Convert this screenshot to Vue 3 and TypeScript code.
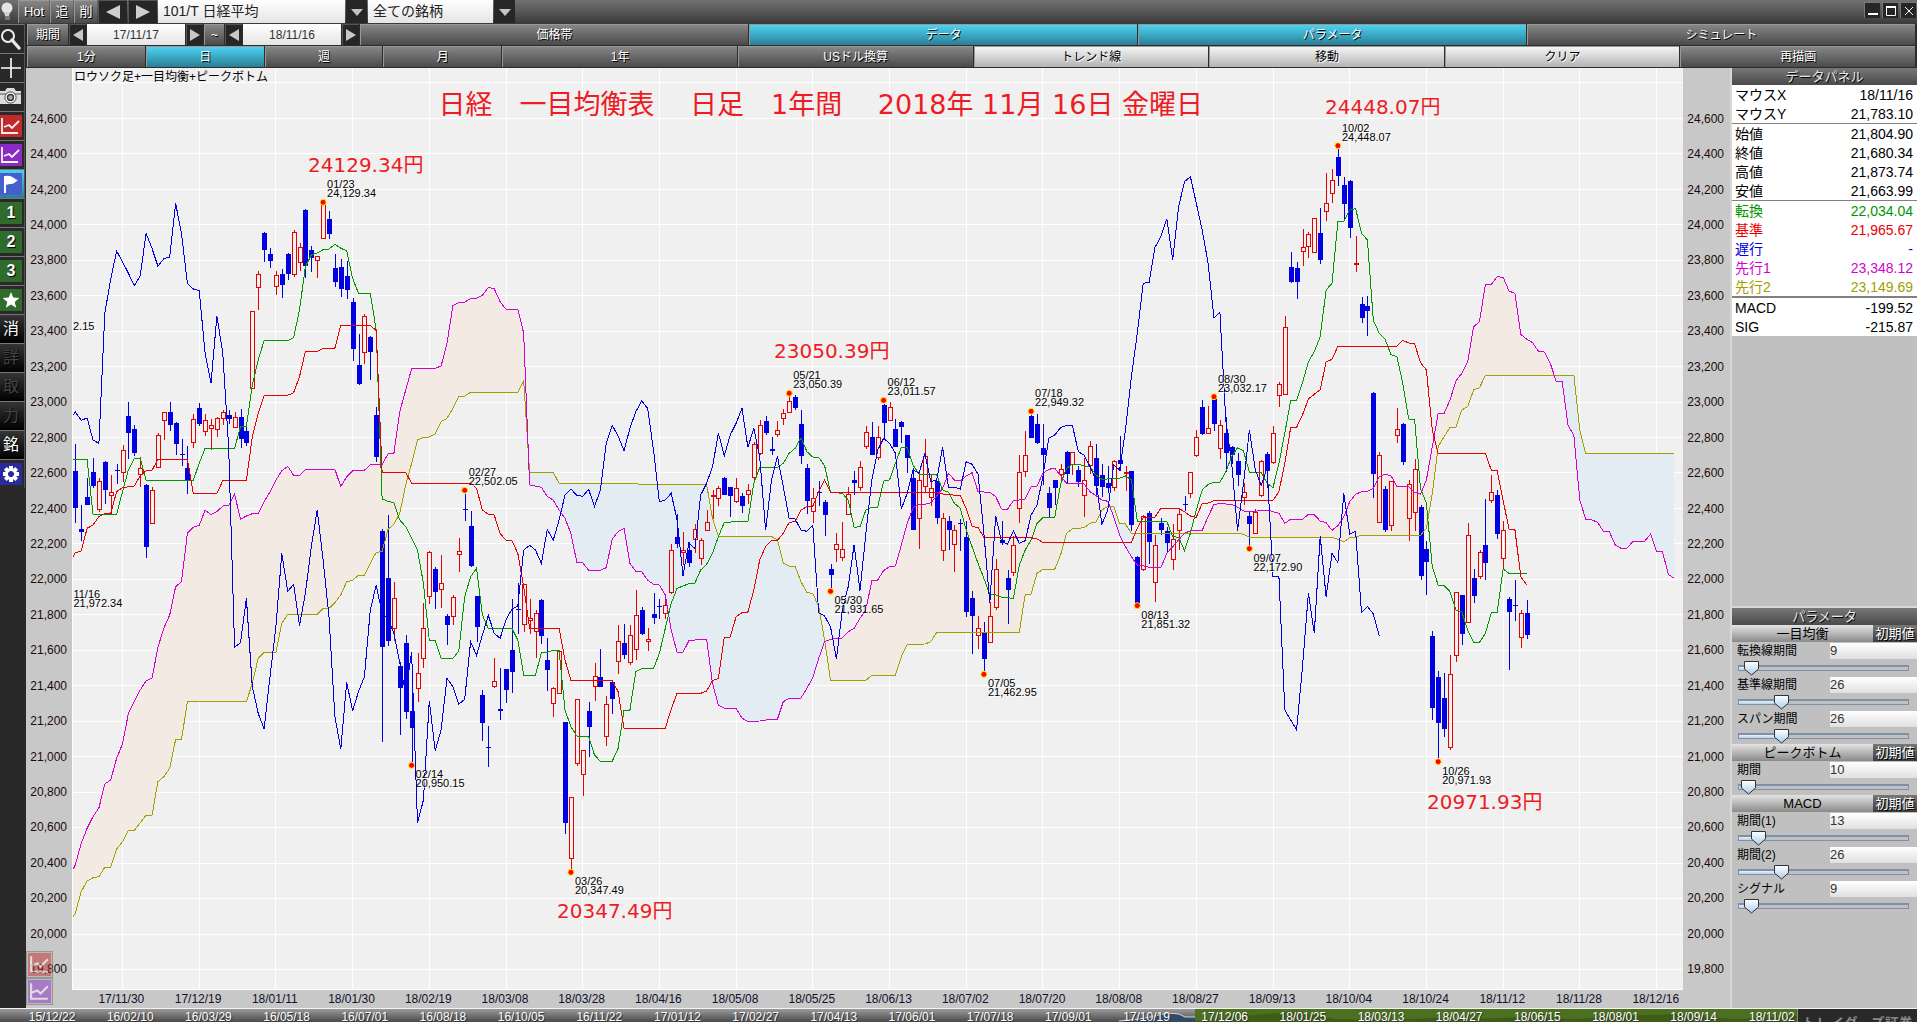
<script setup lang="ts">
import { ref } from 'vue'

type Point = [number, number]

const PLOT_W = 1610
const PLOT_H = 921

// One trading day is 5.9 units wide; vertical readings are stored at three steps per unit.
const dayX = (day: number): number => 2.3 + day * 5.9
const levelY = (level: number): number => level / 3 - 68

const parse = (text: string): Point[] =>
  text.trim().split(/\s+/).map((pair) => {
    const [day, level] = pair.split(',').map(Number)
    return [day, level] as Point
  })

const toPoints = (series: Point[]): string =>
  series.map(([d, l]) => `${dayX(d).toFixed(1)},${levelY(l).toFixed(1)}`).join(' ')

const chikou = parse(`-.5,1248 0,1236 1,1261 2,1254 3,1320 4,1330 5,940 6,838 7,753 8,785 9,820 10,857 11,828 12,700 13,745 14,799 15,776 16,771
17,610 18,700 19,850 20,867 21,872 22,1060 23,1150 24,948 25,1060 26,1345 27,1942 28,1928 29,1795 30,2060 31,2140 32,2186 33,2030 34,1880 35,1660
36,1774 37,1753 38,1877 39,1780 40,1640 41,1530 42,1680 43,1850 44,2150 45,2247 46,2047 47,2133 48,2075 49,2030 50,1830 51,1756 52,1840 53,1858
54,1900 55,1990 56,2080 57,1955 58,2470 59,2400 60,2102 61,2252 62,2190 63,2035 64,2060 65,2113 66,2098 67,1925 68,1966 69,1905 70,1846 71,1900
72,1915 73,1860 74,1827 75,1818 76,1650 77,1636 78,1650 79,1690 80,1588 81,1621 82,1560 83,1485 84,1467 85,1486 86,1489 87,1468 88,1520 89,1470
90,1330 91,1276 92,1308 93,1352 94,1285 95,1235 96,1203 97,1225 98,1350 99,1506 100,1500 101,1480 102,1560 103,1727 104,1628 105,1647 106,1485
107,1450 108,1400 109,1300 110,1367 111,1305 112,1270 113,1225 114,1342 115,1285 116,1370 117,1590 118,1440 119,1369 120,1460 121,1556 122,1557
123,1590 124,1594 125,1575 126,1838 127,1848 128,1880 129,1977 130,1830 131,1760 132,1634 133,1772 134,1600 135,1440 136,1350 137,1315 138,1330
139,1360 140,1527 141,1480 142,1410 143,1420 144,1360 145,1445 146,1440 147,1342 148,1463 149,1462 150,1467 151,1385 152,1393 153,1422 154,1600
155,1810 156,1548 157,1625 158,1632 159,1593 160,1630 161,1622 162,1545 163,1515 164,1430 165,1315 166,1305 167,1283 168,1276 169,1276 170,1355
171,1366 172,1400 173,1440 174,1573 175,1530 176,1395 177,1410 178,1290 179,1130 180,1000 181,850 182,847 183,742 184,710 185,657 186,780 187,620
188,545 189,530 190,610 191,690 192,790 193,955 194,937 195,1260 196,1390 197,1592 198,1450 199,1290 200,1410 201,1455 202,1405 203,1730 204,1728
205,2130 206,2160 207,2189 208,2000 209,1780 210,1900 211,1608 212,1790 213,1660 214,1688 215,1480 216,1602 217,1594 218,1838 219,1819 220,1842
221,1907`)

const tenkan = parse(`-.5,1378 2,1378 3,1543 7,1543 8,1475 9,1410 10,1375 11,1375 12,1441 20,1441 21,1390 22,1345 27,1345 28,1280 29,1279 30,1155
31,1080 32,1022 36,1022 37,1013 38,930 39,800 40,765 41,759 42,749 43,747 44,733 45,745 46,752 47,835 48,880 50,880 51,990 52,1497 53,1504 54,1508
55,1560 56,1580 57,1615 58,1650 59,1750 60,1921 61,1921 62,1975 64,1975 65,1953 66,1790 67,1730 68,1705 69,1845 70,1885 74,1885 75,1920 76,2026
78,2026 79,1957 80,1957 81,1951 82,1952 83,2130 84,2180 85,2208 87,2209 88,2265 89,2284 91,2284 92,2245 93,2131 94,2131 95,2015 96,2006 98,2006
99,1960 100,1885 101,1810 102,1765 104,1751 105,1750 106,1710 107,1693 108,1660 109,1610 110,1567 114,1564 115,1450 116,1403 119,1402 120,1390
121,1360 122,1345 123,1313 124,1355 125,1371 126,1372 127,1397 128,1477 130,1480 131,1500 132,1582 133,1580 134,1530 135,1522 136,1522 137,1443
138,1440 139,1390 140,1342 141,1342 142,1395 143,1422 146,1425 147,1470 148,1477 149,1510 150,1525 151,1590 152,1640 153,1690 154,1735 155,1784
156,1785 157,1792 159,1795 160,1695 161,1650 162,1620 163,1570 164,1553 166,1552 167,1453 168,1405 169,1393 170,1393 171,1398 172,1401 173,1425
174,1438 177,1435 178,1428 179,1440 180,1564 185,1564 186,1610 187,1612 188,1652 189,1600 190,1530 191,1470 192,1453 193,1447 194,1447 195,1415
196,1370 197,1343 198,1353 199,1417 201,1417 202,1450 203,1463 204,1390 205,1300 206,1201 207,1201 208,1148 209,1085 210,1055 211,1010 212,870
213,850 214,664 215,664 216,630 217,626 218,700 219,720 220,960 221,1000 222,1018 223,1064 224,1070 225,1150 226,1257 227,1258 228,1465 229,1510
230,1700 231,1756 232,1757 233,1775 234,1830 235,1835 236,1890 237,1927 238,1927 239,1900 240,1838 241,1837 242,1707 243,1720 246,1720`)

const kijun = parse(`-.5,1676 0,1658 1,1653 2,1585 3,1575 4,1550 5,1541 6,1540 7,1475 8,1463 10,1458 11,1427 12,1412 13,1411 14,1378 19,1378 20,1480
24,1480 25,1442 29,1441 30,1310 31,1240 32,1186 36,1186 37,1178 38,1130 39,1054 41,1054 42,1045 44,1044 45,976 50,976 51,992 52,1417 56,1417
57,1450 67,1450 68,1465 69,1530 70,1543 71,1545 72,1600 73,1621 74,1622 75,1660 76,1760 77,1885 82,1885 83,1980 84,2041 91,2041 92,2075 93,2185
100,2185 101,2127 102,2080 106,2080 107,2073 108,2042 109,2035 110,1912 111,1911 112,1850 113,1838 114,1836 115,1770 116,1680 117,1640 118,1621
119,1621 120,1600 121,1567 122,1565 123,1530 124,1520 125,1518 126,1475 127,1440 128,1477 146,1477 147,1482 150,1487 151,1525 152,1580 153,1582
154,1613 162,1613 163,1617 164,1627 179,1627 180,1585 181,1552 183,1551 184,1525 187,1525 188,1535 189,1548 190,1552 191,1510 192,1509 193,1502
203,1501 204,1475 205,1390 206,1282 207,1282 208,1245 209,1197 210,1183 211,1169 212,1086 213,1078 214,1039 224,1039 225,1021 226,1029 227,1031
228,1088 229,1110 230,1290 231,1360 239,1361 240,1410 241,1412 242,1500 243,1588 244,1589 245,1730 246,1754`)

const senkou1 = parse(`-.5,2612 0,2595 1,2530 2,2485 3,2450 4,2424 5,2352 6,2340 7,2275 8,2232 9,2140 10,2105 11,2070 12,2042 13,2035 14,1942 15,1885
16,1845 17,1760 18,1745 19,1600 20,1582 21,1576 22,1531 23,1544 24,1535 25,1518 26,1516 27,1483 28,1558 29,1548 30,1541 31,1540 32,1505 33,1475
34,1440 35,1412 36,1399 37,1426 38,1427 39,1408 44,1408 45,1460 46,1430 47,1412 49,1411 50,1394 52,1393 53,1362 54,1360 55,1235 56,1170 57,1106
61,1105 62,1098 63,1030 64,917 65,908 66,906 67,896 68,895 69,886 70,862 71,866 72,905 73,928 75,928 76,1000 77,1455 79,1462 80,1490 81,1500
82,1530 83,1555 84,1600 85,1687 86,1688 87,1711 89,1711 90,1703 91,1617 92,1595 93,1585 94,1690 95,1714 96,1715 97,1740 98,1753 99,1755 100,1785
101,1890 102,1957 103,1957 104,1922 105,1920 107,1918 108,2050 109,2115 110,2125 112,2125 113,2155 114,2164 116,2163 117,2160 119,2158 120,2105
121,2095 123,2094 124,2065 125,2033 126,1975 127,1925 128,1918 130,1914 131,1895 132,1885 133,1855 134,1830 135,1742 136,1740 137,1712 138,1700
139,1698 140,1635 141,1570 142,1523 143,1513 144,1513 145,1508 146,1488 147,1465 148,1420 149,1440 150,1443 151,1428 152,1418 153,1475 155,1477
156,1490 157,1527 158,1528 159,1502 160,1500 161,1497 162,1460 163,1458 164,1420 165,1408 166,1405 167,1427 168,1450 171,1452 172,1475 173,1487
174,1500 175,1504 176,1550 177,1605 178,1640 179,1670 180,1695 181,1697 182,1702 184,1703 185,1660 186,1640 187,1620 188,1600 189,1592 191,1591
192,1550 193,1513 194,1511 196,1513 197,1522 198,1533 199,1535 202,1530 204,1540 205,1570 206,1558 208,1558 209,1543 210,1544 211,1563 212,1568
213,1591 214,1577 215,1550 216,1505 217,1483 218,1475 219,1474 220,1465 221,1430 222,1423 223,1427 224,1459 226,1460 227,1477 228,1483 229,1440
230,1340 231,1240 232,1240 233,1200 234,1143 235,1120 236,1085 237,980 238,965 239,853 240,853 241,830 242,832 243,873 244,880 245,1003 246,1018
247,1028 248,1054 249,1056 250,1090 251,1144 252,1144 253,1275 254,1307 255,1500 256,1558 257,1559 258,1567 259,1594 260,1595 261,1635 262,1645
263,1645 264,1624 266,1624 267,1602 268,1654 269,1654 270,1723 271,1735`)

const senkou2 = parse(`-.5,2753 0,2740 1,2675 2,2643 3,2633 4,2630 5,2602 6,2602 7,2547 8,2525 9,2491 10,2491 11,2468 12,2446 13,2446 14,2345 15,2330
16,2305 17,2219 18,2219 19,2105 29,2105 30,2050 31,1975 32,1957 34,1957 35,1870 36,1843 41,1843 42,1825 43,1825 44,1808 45,1785 46,1745 47,1741
48,1726 49,1726 50,1690 51,1657 52,1655 53,1588 54,1573 55,1540 56,1455 57,1390 58,1320 59,1312 60,1311 61,1302 62,1265 63,1255 64,1225 65,1190
66,1188 67,1177 75,1177 76,1142 77,1417 81,1417 82,1450 94,1450 96,1453 107,1453 108,1555 109,1609 118,1609 119,1620 120,1690 121,1698 122,1699
123,1745 124,1778 125,1780 126,1820 127,1920 128,2041 134,2041 135,2026 139,2026 140,1970 141,1935 142,1933 144,1932 145,1925 146,1897 160,1897
161,1783 162,1782 163,1720 164,1708 166,1708 167,1665 168,1600 169,1586 170,1585 171,1583 172,1570 173,1566 174,1530 175,1519 176,1519 177,1570
178,1572 179,1600 197,1600 198,1603 199,1612 213,1612 214,1618 215,1626 216,1613 217,1612 218,1606 228,1606 229,1585 230,1480 231,1340 232,1310
233,1282 234,1282 235,1230 236,1220 237,1170 238,1163 239,1126 254,1126 255,1290 256,1360 271,1361`)

const valueAt = (series: Point[], day: number): number => {
  for (let k = 1; k < series.length; k++) {
    if (series[k][0] >= day) {
      const [d0, l0] = series[k - 1]
      const [d1, l1] = series[k]
      return l0 + ((l1 - l0) * (day - d0)) / (d1 - d0)
    }
  }
  return series[series.length - 1][1]
}

const days: number[] = []
for (let d = -0.5; d <= 271; d += 0.25) days.push(d)
const spanB = days.map((d): Point => [d, valueAt(senkou2, d)])
const upper = days.map((d): Point => [d, Math.min(valueAt(senkou1, d), valueAt(senkou2, d))])
const lower = days.map((d): Point => [d, Math.max(valueAt(senkou1, d), valueAt(senkou2, d))])
const bullCloud = toPoints([...upper, ...[...spanB].reverse()])
const bearCloud = toPoints([...lower, ...[...spanB].reverse()])

const lines = [
  { name: 'senkou2', points: toPoints(senkou2) },
  { name: 'senkou1', points: toPoints(senkou1) },
  { name: 'tenkan', points: toPoints(tenkan) },
  { name: 'kijun', points: toPoints(kijun) },
  { name: 'chikou', points: toPoints(chikou) },
]

// b = falling day, r = rising day; high, body top, body bottom, low.
const candleText = `b1332,1413,1523,1568 b1515,1587,1596,1622 b1435,1491,1515,1515 b1374,1416,1457,1463 r1434,1444,1528,1535 b1383,1386,1470,1511
r1424,1477,1484,1545 b1391,1411,1414,1451 r1335,1351,1417,1445 b1206,1248,1298,1376 b1275,1287,1358,1367 r1372,1405,1422,1460 b1452,1454,1641,1674
r1461,1470,1568,1568 r1298,1306,1402,1404 r1235,1237,1261,1320 b1206,1236,1274,1293 b1266,1269,1331,1365 b1317,1362,1365,1397 b1338,1404,1440,1481
r1242,1258,1327,1345 b1209,1224,1272,1278 r1242,1260,1292,1307 r1258,1276,1283,1349 r1251,1254,1286,1310 r1230,1237,1254,1274 b1230,1245,1258,1271
r1236,1252,1282,1282 b1227,1251,1316,1345 b1267,1293,1328,1338 r934,934,1165,1167 r813,823,862,930 b696,699,749,785 b745,763,782,803
r814,826,857,884 b808,822,854,893 b760,762,822,840 r690,697,821,830 r730,742,787,812 b627,630,797,833 b739,751,773,815 r769,769,781,833
r605,610,713,718 b633,657,701,716 b762,804,845,860 b778,801,866,891 b783,828,869,896 b895,907,1047,1082 b1003,1095,1151,1154 r942,947,1057,1091
b1008,1011,1056,1140 b1221,1245,1370,1385 b1587,1593,1940,2225 b1545,1734,1922,1937 r1745,1794,1885,1923 b1985,1997,2064,2205 b1904,1928,2136,2157
b2040,2133,2184,2285 r1959,2020,2063,2107 r1808,1885,1973,2003 r1653,1657,1787,1813 b1701,1707,1775,1826 r1665,1750,1768,1824 b1842,1848,1875,1935
r1785,1792,1849,1875 r1613,1654,1663,1716 b1482,1527,1530,1563 b1533,1578,1698,1701 b1788,1788,1880,1925 b2070,2085,2169,2222 b2178,2241,2244,2301
r1973,2044,2059,2065 b2005,2127,2132,2160 b2007,2007,2070,2109 b1797,1950,2015,2078 b1748,1826,1829,1902 r1751,1753,1873,1895 r1797,1855,1861,1903
r1830,1840,1894,1973 b1797,1800,1907,1931 b1913,1980,2010,2073 r2062,2065,2110,2150 r1950,1954,2080,2080 b2165,2166,2469,2501 r2392,2392,2575,2607
r2097,2098,2290,2297 r2250,2251,2323,2387 b2106,2134,2180,2270 r1990,2027,2059,2102 b1946,2030,2060,2060 r2087,2113,2207,2238 b2046,2047,2096,2141
r1875,1924,1982,2022 b1873,1929,1964,1976 r1875,1905,1985,1994 r1770,1846,1948,1979 b1820,1829,1902,1905 r1885,1917,1923,1953 b1779,1842,1853,1871
b1796,1819,1822,1856 r1787,1816,1840,1857 r1632,1651,1775,1782 b1543,1611,1631,1644 r1596,1651,1657,1694 b1627,1650,1688,1701 r1572,1588,1616,1658
r1614,1621,1673,1694 r1530,1567,1590,1594 r1470,1485,1489,1558 r1459,1465,1495,1517 b1431,1434,1485,1485 b1461,1461,1487,1550 r1435,1465,1502,1510
b1480,1488,1517,1540 r1453,1471,1481,1513 r1326,1333,1432,1444 r1260,1276,1360,1366 b1248,1263,1299,1306 b1311,1347,1352,1366 r1263,1291,1301,1310
r1227,1240,1255,1274 r1189,1204,1237,1238 b1185,1191,1224,1229 b1230,1272,1367,1392 b1392,1404,1502,1541 r1464,1495,1534,1568 b1443,1476,1479,1517
b1501,1506,1545,1608 b1692,1707,1724,1765 r1599,1631,1648,1685 r1566,1646,1670,1684 r1462,1482,1543,1546 b1414,1440,1449,1486 r1383,1402,1460,1472
r1278,1297,1339,1346 b1266,1311,1364,1366 r1278,1310,1372,1380 b1213,1215,1268,1315 r1206,1222,1261,1263 b1257,1287,1340,1342 b1263,1266,1280,1329
b1305,1305,1373,1418 b1405,1433,1589,1591 r1420,1441,1555,1647 r1317,1369,1459,1477 r1422,1463,1490,1517 b1443,1443,1554,1571 r1539,1555,1651,1682
b1548,1563,1590,1651 r1576,1591,1633,1716 b1557,1569,1572,1652 b1563,1611,1835,1850 b1773,1794,1847,1961 r1848,1885,1906,1946 b1867,1896,1977,2017
r1806,1849,1925,1925 r1677,1708,1822,1829 b1563,1620,1628,1634 b1710,1734,1769,1871 r1609,1636,1717,1727 r1366,1417,1525,1569 r1293,1366,1414,1430
b1245,1248,1313,1313 b1242,1272,1328,1332 b1272,1344,1365,1455 b1461,1479,1523,1552 b1440,1440,1464,1515 r1392,1408,1422,1445 b1353,1356,1422,1448
r1357,1357,1393,1424 b1398,1410,1446,1460 r1375,1441,1486,1550 r1323,1339,1396,1422 b1332,1374,1459,1484 b1393,1425,1461,1490 b1398,1450,1464,1478
r1380,1384,1462,1472 b1308,1380,1391,1412 r1398,1417,1420,1472 b1413,1414,1575,1592 b1669,1671,1812,1817 r1546,1547,1708,1713 b1534,1539,1625,1693
r1606,1634,1747,1805 b1555,1569,1590,1606 b1582,1593,1628,1658 r1573,1618,1678,1710 r1527,1543,1591,1649 b1488,1513,1516,1532 r1415,1417,1480,1495
r1290,1312,1366,1372 b1200,1221,1301,1306 r1218,1284,1300,1300 b1192,1194,1271,1292 r1260,1276,1345,1377 b1252,1300,1358,1417 b1338,1341,1365,1393
b1360,1383,1424,1458 r1448,1477,1492,1515 b1536,1548,1571,1641 r1527,1537,1600,1603 r1381,1384,1486,1490 b1357,1362,1412,1463 r1278,1300,1387,1393
r1146,1153,1186,1222 r948,982,1183,1183 b756,801,845,849 b786,804,845,896 r687,742,754,797 r696,703,737,775 r655,655,755,760 b624,699,780,791
r520,609,632,662 r508,541,580,608 b447,471,528,558 b531,555,612,656 b541,543,683,713 r708,788,791,815 b891,912,953,968 b888,919,933,1007
b1176,1179,1422,1494 r1356,1366,1565,1565 b1458,1467,1590,1597 r1444,1444,1576,1593 r1224,1288,1306,1328 b1269,1272,1386,1396 r1440,1453,1555,1622
r1377,1408,1537,1593 b1515,1521,1727,1739 b1623,1647,1685,1784 b1893,1908,2123,2159 b2013,2031,2168,2275 b2019,2094,2187,2210 r1965,2023,2242,2249
r1777,1777,1966,1985 b1785,1785,1901,1934 r1569,1606,1865,1868 b1706,1734,1787,1808 r1650,1657,1727,1738 b1497,1635,1688,1739 r1425,1477,1499,1510
b1470,1485,1601,1616 r1563,1591,1673,1710 b1791,1797,1835,2010 b1740,1815,1818,1862 r1830,1840,1912,1943 b1800,1839,1905,1916`

const candles = candleText.split(/\s+/).map((entry, day) => {
  const [high, top, bottom, low] = entry.slice(1).split(',').map((v) => Math.round(levelY(Number(v))))
  return {
    kind: entry[0] === 'r' ? 'rise' : 'fall',
    x: Math.round(dayX(day)),
    high,
    top,
    bottom: Math.max(bottom, top + 1),
    low: Math.max(low, bottom),
  }
})

const rowLines = Array.from({ length: 26 }, (_, k) => Math.round(levelY(247 + k * 106.4)))
const columnLines = Array.from({ length: 21 }, (_, k) => Math.round(49 + k * 76.7))

const prices = Array.from({ length: 25 }, (_, k) => (24600 - k * 200).toLocaleString('en-US'))
const dates = ['17/11/30', '17/12/19', '18/01/11', '18/01/30', '18/02/19', '18/03/08', '18/03/28', '18/04/16', '18/05/08', '18/05/25',
  '18/06/13', '18/07/02', '18/07/20', '18/08/08', '18/08/27', '18/09/13', '18/10/04', '18/10/24', '18/11/12', '18/11/28', '18/12/16']
const history = ['15/12/22', '16/02/10', '16/03/29', '16/05/18', '16/07/01', '16/08/18', '16/10/05', '16/11/22', '17/01/12', '17/02/27',
  '17/04/13', '17/06/01', '17/07/18', '17/09/01', '17/10/19', '17/12/06', '18/01/25', '18/03/13', '18/04/27', '18/06/15', '18/08/01',
  '18/09/14', '18/11/02']

const percent = (value: number, total: number): string => `${((value / total) * 100).toFixed(3)}%`

const peak = (day: number, level: number, side: 'above' | 'below', date: string, price: string) => ({
  x: dayX(day), y: levelY(level), side, date, price,
})
const peaks = [
  peak(-1, 1754, 'below', '11/16', '21,972.34'),
  peak(42, 607, 'above', '01/23', '24,129.34'),
  peak(57, 2296, 'below', '02/14', '20,950.15'),
  peak(66, 1471, 'above', '02/27', '22,502.05'),
  peak(84, 2617, 'below', '03/26', '20,347.49'),
  peak(121, 1180, 'above', '05/21', '23,050.39'),
  peak(128, 1774, 'below', '05/30', '21,931.65'),
  peak(137, 1201, 'above', '06/12', '23,011.57'),
  peak(154, 2023, 'below', '07/05', '21,462.95'),
  peak(162, 1234, 'above', '07/18', '22,949.32'),
  peak(180, 1817, 'below', '08/13', '21,851.32'),
  peak(193, 1190, 'above', '08/30', '23,032.17'),
  peak(199, 1646, 'below', '09/07', '22,172.90'),
  peak(214, 437, 'above', '10/02', '24,448.07'),
  peak(231, 2285, 'below', '10/26', '20,971.93'),
]

const notes = [
  { text: '24129.34円', x: 235, y: 97 },
  { text: '24448.07円', x: 1252, y: 39 },
  { text: '23050.39円', x: 701, y: 283 },
  { text: '20347.49円', x: 484, y: 843 },
  { text: '20971.93円', x: 1354, y: 734 },
]

const dataGroups = [
  [['マウスX', '18/11/16', ''], ['マウスY', '21,783.10', '']],
  [['始値', '21,804.90', ''], ['終値', '21,680.34', ''], ['高値', '21,873.74', ''], ['安値', '21,663.99', '']],
  [['転換', '22,034.04', 'green'], ['基準', '21,965.67', 'red'], ['遅行', '-', 'blue'], ['先行1', '23,348.12', 'magenta'], ['先行2', '23,149.69', 'olive']],
  [['MACD', '-199.52', ''], ['SIG', '-215.87', '']],
]

const sections = ref([
  { title: '一目均衡', items: [
    { label: '転換線期間', value: 9, min: 6, max: 93 },
    { label: '基準線期間', value: 26, min: 6, max: 93 },
    { label: 'スパン期間', value: 26, min: 6, max: 93 },
  ] },
  { title: 'ピークボトム', items: [{ label: '期間', value: 10, min: 9, max: 109 }] },
  { title: 'MACD', items: [
    { label: '期間(1)', value: 13, min: 6, max: 93 },
    { label: '期間(2)', value: 26, min: 6, max: 93 },
    { label: 'シグナル', value: 9, min: 6, max: 93 },
  ] },
])
const fillOf = (item: { value: number; min: number; max: number }): string =>
  percent(item.value - item.min, item.max - item.min)

const views = [
  { label: '価格帯', on: false }, { label: 'データ', on: true }, { label: 'パラメータ', on: true }, { label: 'シミュレート', on: false },
]
const tools = [
  { label: '1分', kind: '' }, { label: '日', kind: 'on' }, { label: '週', kind: '' }, { label: '月', kind: '' },
  { label: '1年', kind: 'wide' }, { label: 'USドル換算', kind: 'wide' }, { label: 'トレンド線', kind: 'wide light' },
  { label: '移動', kind: 'wide light' }, { label: 'クリア', kind: 'wide light' }, { label: '再描画', kind: 'wide' },
]
const side = [
  { id: 'search', label: '検索' }, { id: 'cross', label: '十字線' }, { id: 'camera', label: '撮影' },
  { id: 'chart', label: 'チャート1', tile: 'tile-red' }, { id: 'chart', label: 'チャート2', tile: 'tile-purple' },
  { id: 'flag', label: '旗', tile: 'tile-blue', active: true },
  { id: 'text', label: '1', tile: 'tile-green' }, { id: 'text', label: '2', tile: 'tile-green' }, { id: 'text', label: '3', tile: 'tile-green' },
  { id: 'star', label: 'お気に入り', tile: 'tile-green' },
  { id: 'text', label: '消', word: true }, { id: 'text', label: '詳', word: true, off: true }, { id: 'text', label: '取', word: true, off: true },
  { id: 'text', label: '力', word: true, off: true }, { id: 'text', label: '銘', word: true },
  { id: 'gear', label: '設定', tile: 'tile-navy' },
]
const teeth = [0, 45, 90, 135, 180, 225, 270, 315]
const dateFrom = ref('17/11/17')
const dateTo = ref('18/11/16')
</script>

<template>
  <div class="app">
    <header class="titlebar">
      <svg class="bulb" viewBox="0 0 16 22" aria-hidden="true">
        <circle cx="6" cy="8" r="5.500" fill="#e4e4e4" /><path d="M3 12h6l-1 4H4z" fill="#d0d0d0" />
        <path d="M4 16h5v4H4z" fill="#9a9a9a" /><path d="M4 17h5M4 19h5" stroke="#555" />
      </svg>
      <button class="btn hot">Hot</button>
      <button class="btn word">追</button>
      <button class="btn word">削</button>
      <button class="btn dark nav" aria-label="前の銘柄"><svg viewBox="0 0 14 16"><path d="M14 1v14L0 8z" fill="#cfcfcf" /></svg></button>
      <button class="btn dark nav" aria-label="次の銘柄"><svg viewBox="0 0 14 16"><path d="M0 1v14l14-7z" fill="#cfcfcf" /></svg></button>
      <label class="pick stock">
        <select aria-label="銘柄"><option>101/T 日経平均</option></select>
        <span class="drop"><svg viewBox="0 0 12 8"><path d="M0 1h12L6 8z" fill="#c4c4c4" /></svg></span>
      </label>
      <label class="pick group">
        <select aria-label="銘柄グループ"><option>全ての銘柄</option></select>
        <span class="drop"><svg viewBox="0 0 12 8"><path d="M0 1h12L6 8z" fill="#c4c4c4" /></svg></span>
      </label>
      <div class="window">
        <button aria-label="最小化"><svg viewBox="0 0 12 12"><path d="M1 9h10" stroke="#fff" stroke-width="2" /></svg></button>
        <button aria-label="最大化"><svg viewBox="0 0 12 12"><path d="M1.5 1.5h9v9h-9z" fill="none" stroke="#fff" /><path d="M1 2h10" stroke="#fff" stroke-width="2" /></svg></button>
        <button aria-label="閉じる"><svg viewBox="0 0 12 12"><path d="M2 2l8 8M10 2l-8 8" stroke="#fff" /></svg></button>
      </div>
    </header>

    <div class="body">
      <nav class="sidebar">
        <button v-for="(b, n) in side" :key="n" :class="{ active: b.active, word: b.word, off: b.off }" :aria-label="b.label">
          <span class="tile" :class="b.tile">
            <template v-if="b.id === 'text'">{{ b.label }}</template>
            <svg v-else viewBox="0 0 22 22">
              <template v-if="b.id === 'search'">
                <circle cx="8" cy="8" r="6" fill="none" stroke="#f0f0f0" stroke-width="2" />
                <path d="M12 12l7 8" stroke="#e8e8e8" stroke-width="3.4" stroke-linecap="round" />
              </template>
              <path v-else-if="b.id === 'cross'" d="M11 1v20M1 11h20" stroke="#fff" stroke-width="1.6" />
              <template v-else-if="b.id === 'camera'">
                <path d="M0 5h5l2-3h7l2 3h5v13H0z" fill="#dcdcdc" /><path d="M0 8h21" stroke="#555" />
                <circle cx="10.5" cy="11.5" r="5.6" fill="#fff" stroke="#444" /><circle cx="10.5" cy="11.5" r="3" fill="#aaa" stroke="#333" stroke-width="1.4" />
              </template>
              <template v-else-if="b.id === 'chart'">
                <path d="M2 3v15h16" fill="none" stroke="#f4f4f4" stroke-width="1.8" />
                <path d="M4 12l5-2 3 3 7-7" fill="none" stroke="#f4f4f4" stroke-width="1.8" />
              </template>
              <path v-else-if="b.id === 'flag'" d="M4 3v17h2V12c4-2 6 1 12-5-4 0-5-5-12-4z" fill="#fff" />
              <path v-else-if="b.id === 'star'" d="M11 3l2.3 5.6 6 .4-4.6 3.9 1.5 5.9L11 15.6 5.8 18.800l1.5-5.9L2.7 9l6-.4z" fill="#fff" />
              <g v-else fill="#fff">
                <rect v-for="a in teeth" :key="a" x="9" y="3" width="4" height="5" :transform="`rotate(${a} 11 11)`" />
                <circle cx="11" cy="11" r="4.600" fill="none" stroke="#fff" stroke-width="3" />
              </g>
            </svg>
          </span>
        </button>
      </nav>

      <div class="workspace">
        <div class="row">
          <span class="btn period">期間</span>
          <button class="btn dark step" aria-label="開始日を戻す"><svg viewBox="0 0 10 12"><path d="M10 0v12L0 6z" fill="#c8c8c8" /></svg></button>
          <input v-model="dateFrom" class="date" aria-label="開始日" />
          <button class="btn dark step" aria-label="開始日を進める"><svg viewBox="0 0 10 12"><path d="M0 0v12l10-6z" fill="#c8c8c8" /></svg></button>
          <span class="btn tilde">~</span>
          <button class="btn dark step" aria-label="終了日を戻す"><svg viewBox="0 0 10 12"><path d="M10 0v12L0 6z" fill="#c8c8c8" /></svg></button>
          <input v-model="dateTo" class="date" aria-label="終了日" />
          <button class="btn dark step" aria-label="終了日を進める"><svg viewBox="0 0 10 12"><path d="M0 0v12l10-6z" fill="#c8c8c8" /></svg></button>
          <button v-for="v in views" :key="v.label" class="btn grow" :class="{ on: v.on }">{{ v.label }}</button>
        </div>
        <div class="row">
          <button v-for="t in tools" :key="t.label" class="btn grow" :class="t.kind">{{ t.label }}</button>
        </div>

        <div class="content">
          <main class="chart">
            <div class="prices left"><span v-for="p in prices" :key="p">{{ p }}</span></div>
            <div class="plot">
              <svg class="canvas" :viewBox="`0 0 ${PLOT_W} ${PLOT_H}`" preserveAspectRatio="none">
                <g class="grid">
                  <rect v-for="y in rowLines" :key="'r' + y" x="0" :y="y" :width="PLOT_W" height="1" />
                  <rect v-for="x in columnLines" :key="'c' + x" :x="x" y="0" width="1" :height="PLOT_H" />
                </g>
                <polygon class="bull" :points="bullCloud" />
                <polygon class="bear" :points="bearCloud" />
                <g v-for="(c, n) in candles" :key="n" :class="c.kind">
                  <rect class="solid" :x="c.x" :y="c.high" width="1" :height="Math.max(0, c.top - c.high)" />
                  <rect class="solid" :x="c.x" :y="c.bottom" width="1" :height="Math.max(0, c.low - c.bottom)" />
                  <rect v-if="c.kind === 'fall'" class="solid" :x="c.x - 2" :y="c.top" width="5" :height="c.bottom - c.top" />
                  <rect v-else class="hollow" :x="c.x - 1.5" :y="c.top + 0.5" width="4" :height="c.bottom - c.top" />
                </g>
                <polyline v-for="l in lines" :key="l.name" class="line" :class="l.name" :points="l.points" />
                <circle v-for="p in peaks" :key="p.date" class="dot" :cx="p.x" :cy="p.y" r="3" />
              </svg>
              <span class="legend">ロウソク足+一目均衡+ピークボトム</span>
              <h1 class="heading">日経　一目均衡表　 日足　1年間　 2018年 11月 16日 金曜日</h1>
              <span class="clipped">2.15</span>
              <span
                v-for="p in peaks" :key="p.date" class="peak" :class="p.side"
                :style="{ left: percent(p.x, PLOT_W), top: percent(p.y, PLOT_H) }"
              >{{ p.date }}<br />{{ p.price }}</span>
              <span
                v-for="n in notes" :key="n.text" class="note"
                :style="{ left: percent(n.x, PLOT_W), top: percent(n.y, PLOT_H) }"
              >{{ n.text }}</span>
            </div>
            <div class="prices right"><span v-for="p in prices" :key="p">{{ p }}</span></div>
            <div class="dates"><span v-for="d in dates" :key="d">{{ d }}</span></div>
            <div class="floating">
              <button v-for="t in ['tile-red', 'tile-purple']" :key="t" :aria-label="t === 'tile-red' ? 'サブチャート1' : 'サブチャート2'">
                <svg :class="t" viewBox="0 0 22 22">
                  <path d="M3 3v15h16M4 12l5-2 3 3 7-7" fill="none" stroke="#f4f4f4" stroke-width="2" />
                </svg>
              </button>
            </div>
          </main>

          <aside class="panel">
            <h2 class="bar">データパネル</h2>
            <table class="data">
              <tbody v-for="(g, n) in dataGroups" :key="n">
                <tr v-for="r in g" :key="r[0]" :class="r[2]"><th scope="row">{{ r[0] }}</th><td>{{ r[1] }}</td></tr>
              </tbody>
            </table>
            <div class="params">
              <h2 class="bar">パラメータ</h2>
              <section v-for="s in sections" :key="s.title">
                <div class="sectionhead"><h3>{{ s.title }}</h3><button>初期値</button></div>
                <div v-for="item in s.items" :key="item.label" class="param">
                  <label class="field"><span>{{ item.label }}</span><input v-model.number="item.value" type="text" /></label>
                  <input
                    v-model.number="item.value" type="range" :min="item.min" :max="item.max"
                    :aria-label="item.label" :style="{ '--fill': fillOf(item) }"
                  />
                </div>
              </section>
            </div>
          </aside>
        </div>
      </div>
    </div>

    <footer class="footer">
      <div class="timeline">
        <div class="past">
          <svg viewBox="0 0 76 14" preserveAspectRatio="none">
            <path d="M0 12l20-2 12-2 16-4 12 1 6 3h10v6H0z" fill="#33496a" /><path d="M0 12l20-2 12-2 16-4 12 1 6 3h10" fill="none" stroke="#d8d8d8" />
          </svg>
        </div>
        <div class="selected">
          <svg viewBox="0 0 602 14" preserveAspectRatio="none">
            <path d="M0 12l40-4 30-3 30-2 40 7 50 1 50-2 40 1 50-2 50 2 50-3 50-2 60 5 62-3v9H0z" fill="#3d5c16" />
          </svg>
        </div>
        <div class="history"><span v-for="d in history" :key="d">{{ d }}</span></div>
      </div>
      <div class="brand">トレイダーズ証券</div>
    </footer>
  </div>
</template>

<style>
body { margin: 0; overflow: hidden; }
</style>

<style scoped>
* { box-sizing: border-box; }
.app {
  display: flex; flex-direction: column; height: 100vh; overflow: hidden; background: #292929; color: #000;
  font-family: "Liberation Sans", "Noto Sans CJK JP", sans-serif; font-size: 12px; line-height: 16px;
}
button, input, select { font: inherit; border: 0; border-radius: 0; margin: 0; padding: 0; }
h1, h2, h3 { margin: 0; font-weight: 400; }

.btn {
  display: flex; align-items: center; justify-content: center; height: 21px; color: #fff;
  background: linear-gradient(#868686, #4a4a4a); border-top: 1px solid #999; border-left: 1px solid #999;
  text-shadow: 1px 1px 0 #000; white-space: nowrap;
}
.btn.dark { background: #262626; border-color: #555; }
.btn.on { background: linear-gradient(#4dd2f2, #2a7f95); }
.btn.light { background: linear-gradient(#f4f4f4, #b4b4b4); color: #000; text-shadow: 1px 1px 0 #fff; }

.titlebar { display: flex; align-items: flex-start; height: 24px; background: linear-gradient(#717171, #393939); flex: none; }
.titlebar .btn { height: 23px; margin-right: 1px; font-size: 13px; }
.bulb { width: 18px; height: 22px; }
.titlebar .hot { width: 31px; }
.titlebar .word { width: 23px; }
.titlebar .nav { width: 29px; }
.nav svg { width: 14px; height: 16px; }
.pick { display: flex; height: 23px; }
.pick select { appearance: none; background: linear-gradient(#fff, #e4e4e4); color: #222; font-size: 14px; padding: 0 4px 2px 5px; }
.stock select { width: 187px; }
.group select { width: 125px; }
.drop { display: flex; align-items: center; justify-content: center; width: 21px; margin: 0 1px; background: #262626; }
.drop svg { width: 12px; height: 8px; }
.window { display: flex; gap: 2px; margin: 2px 1px 0 auto; }
.window button { display: flex; align-items: center; justify-content: center; width: 16px; height: 16px; background: #262626; border-top: 1px solid #777; border-left: 1px solid #777; }
.window svg { width: 12px; height: 12px; }

.body { display: flex; flex: 1; min-height: 0; }
.sidebar { width: 26px; flex: none; }
.sidebar button {
  display: flex; align-items: center; width: 25px; height: 29px; color: #fff; background: #292929;
  border-top: 1px solid #777; border-right: 1px solid #555;
}
.sidebar button.word { background: linear-gradient(#353535, #000); font-size: 16px; }
.sidebar button.off { color: #444; }
.sidebar button.active { background: linear-gradient(#4dd2f2, #2a7f95); }
.tile { display: flex; align-items: center; justify-content: center; width: 22px; height: 22px; font-size: 16px; text-shadow: 1px 1px 1px #000; }
.tile svg { width: 22px; height: 22px; }
.tile-red { background: #c22a2a; }
.tile-purple { background: #8a2cc4; }
.tile-blue { background: #4560cc; }
.tile-green { background: #2f6b2c; font-weight: 700; }
.tile-navy { background: #2a2a9c; }

.workspace { display: flex; flex-direction: column; flex: 1; min-width: 0; }
.row { display: flex; gap: 1px; height: 22px; padding: 0 2px 0 1px; background: #2c2c2c; flex: none; }
.period { width: 41px; }
.step { width: 17px; }
.step svg { width: 10px; height: 12px; }
.tilde { width: 20px; }
.date { width: 98px; height: 21px; text-align: center; background: linear-gradient(#fff, #e4e4e4); color: #333; }
.grow { flex: 1 1 0; min-width: 0; }
.wide { flex: 2 1 1px; }

.content { display: flex; flex: 1; min-height: 0; }
.chart {
  position: relative; flex: 1; min-width: 0; display: grid; grid-template-columns: 46px minmax(0, 1fr) 47px;
  grid-template-rows: minmax(0, 1fr) 18px; background: #c8c8c8;
}
.prices { display: flex; flex-direction: column; padding: 33px 0 3px; color: #1c0808; }
.prices span { display: flex; flex: 1; align-items: center; justify-content: flex-end; }
.left { padding-right: 5px; }
.right { padding-right: 6px; }
.dates { grid-column: 1 / -1; display: flex; margin: 0 36px 0 57px; color: #101028; }
.dates span { flex: 1; text-align: center; line-height: 19px; }
.plot { position: relative; overflow: hidden; background: #f0f0f0; border: 1px solid #fff; border-width: 0 0 1px 1px; }
.canvas { display: block; width: 100%; height: 100%; shape-rendering: crispEdges; }
.grid rect { fill: #fff; }
.bull { fill: #f4eae4; }
.bear { fill: #e3ebf3; }
.line { fill: none; stroke-width: 1; vector-effect: non-scaling-stroke; }
.senkou1 { stroke: #d200d2; }
.senkou2 { stroke: #a0a000; }
.tenkan { stroke: #009600; }
.kijun { stroke: #e60000; }
.chikou { stroke: #0000e0; }
.fall .solid { fill: #0000e0; }
.rise .solid { fill: #e60000; }
.rise .hollow { fill: none; stroke: #e60000; }
.dot { fill: #f00; stroke: #fe0; shape-rendering: auto; }
.legend { position: absolute; left: 1px; top: 1px; white-space: nowrap; }
.heading, .note { color: #ed1c24; font-family: "DejaVu Sans", "Noto Sans CJK JP", sans-serif; white-space: nowrap; }
.heading { position: absolute; left: 22.7%; top: 21px; font-size: 27px; line-height: 32px; font-weight: 400; }
.note { position: absolute; font-size: 20px; line-height: 24px; transform: translateY(-50%); }
.peak, .clipped { position: absolute; font-size: 11px; line-height: 9px; white-space: nowrap; text-shadow: 1px 1px 0 #fff; }
.peak { padding-left: 4px; }
.above { transform: translateY(-22px); }
.below { transform: translateY(5px); }
.clipped { left: 0; top: 27.6%; }
.floating { position: absolute; left: 0; bottom: 3px; display: flex; flex-direction: column; opacity: .5; }
.floating button { display: flex; align-items: center; justify-content: center; width: 27px; height: 27px; background: #b0b0b0; border: 1px solid #666; }
.floating svg { width: 23px; height: 23px; }

.panel { display: flex; flex-direction: column; width: 187px; flex: none; background: #c0c0c0; border-left: 2px solid #d8d8d8; }
.bar {
  height: 17px; line-height: 17px; font-size: 13px; text-align: center; color: #e8e8e8;
  background: linear-gradient(#777, #4a4a4a); text-shadow: 1px 1px 0 #000;
}
.data { width: 100%; border-collapse: collapse; background: #fff; font-size: 14px; }
.data th, .data td { height: 19px; padding: 1px 4px 0 3px; line-height: 18px; font-weight: 400; text-align: left; }
.data td { text-align: right; }
.data tbody + tbody { border-top: 1px solid #808080; }
.data tbody:last-child { border-top-width: 2px; }
.green { color: #009600; }
.red { color: #e60000; }
.blue { color: #0000e0; }
.magenta { color: #d200d2; }
.olive { color: #a0a000; }
.params { margin-top: auto; padding-bottom: 94px; border-top: 2px solid #d8d8d8; }
.sectionhead { display: flex; height: 17px; }
.sectionhead h3 { flex: 1; text-align: center; font-size: 13px; line-height: 17px; background: linear-gradient(#e4e4e4, #8a8a8a); }
.sectionhead button { width: 44px; font-size: 13px; line-height: 16px; color: #fff; background: linear-gradient(#777, #3c3c3c); text-shadow: 1px 1px 0 #000; }
.param { height: 34px; padding-top: 1px; }
.field { display: flex; align-items: center; height: 16px; padding-left: 5px; }
.field span { flex: 1; }
.field input { width: 87px; height: 16px; font-size: 13px; color: #333; background: linear-gradient(#fff, #e0e0e0); }
input[type="range"] {
  appearance: none; display: block; width: calc(100% - 14px); height: 16px; margin-left: 6px;
  background: linear-gradient(#e8f0fa, #a9c4e4) 0 8px / var(--fill) 4px no-repeat;
}
input[type="range"]::-webkit-slider-runnable-track { height: 6px; margin-top: 2px; border: 1px solid #7d90a6; border-top-width: 2px; }
input[type="range"]::-webkit-slider-thumb {
  appearance: none; width: 15px; height: 16px; margin-top: -7px;
  background: url("data:image/svg+xml,%3Csvg xmlns='http://www.w3.org/2000/svg' viewBox='0 0 15 16'%3E%3Cdefs%3E%3ClinearGradient id='g' x2='0' y2='1'%3E%3Cstop stop-color='%23fff'/%3E%3Cstop offset='1' stop-color='%23a9cdec'/%3E%3C/linearGradient%3E%3C/defs%3E%3Cpath d='M.5 1.500h14v7.500l-7 6-7-6z' fill='url(%23g)' stroke='%23333'/%3E%3C/svg%3E") center / 15px 16px no-repeat;
}

.footer { display: flex; height: 14px; flex: none; overflow: hidden; border-top: 1px solid #f4f4f4; background: #292929; }
.timeline { position: relative; display: flex; flex: 1; min-width: 0; overflow: hidden; color: #fff; }
.past { flex: 1194; display: flex; justify-content: flex-end; background: linear-gradient(#9a9a9a, #4a4a4a); }
.past svg { width: 76px; height: 14px; }
.selected { flex: 602; background: #4b7020; }
.selected svg { display: block; width: 100%; height: 14px; }
.history { position: absolute; top: 1px; left: 13px; right: -14px; display: flex; }
.history span { flex: 1; text-align: center; line-height: 15px; text-shadow: 1px 1px 0 #333; }
.brand { width: 120px; padding-left: 4px; font-size: 14px; font-weight: 700; line-height: 28px; color: #888; white-space: nowrap; border-left: 1px solid #888; }
</style>
